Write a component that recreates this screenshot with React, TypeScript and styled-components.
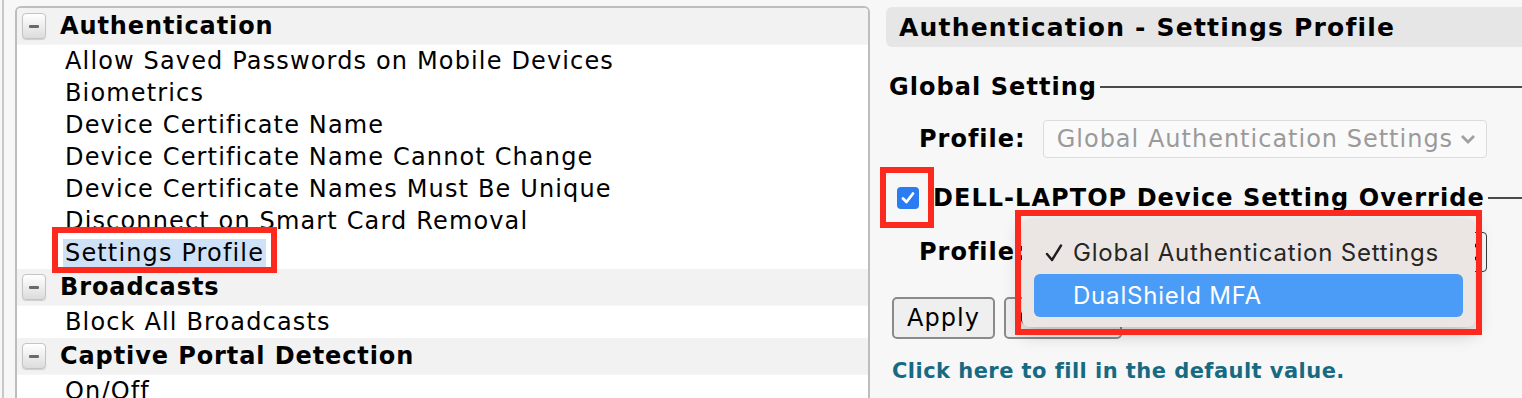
import React from "react";
import styled, { createGlobalStyle } from "styled-components";

const GlobalStyle = createGlobalStyle`
  html, body {
    margin: 0;
    padding: 0;
    background: #f7f7f7;
    font-family: "DejaVu Sans", Verdana, sans-serif;
    color: #000;
  }
`;

const Page = styled.div`
  position: relative;
  display: flex;
  width: 1522px;
  height: 398px;
  overflow: hidden;
  background: #f7f7f7;
`;

// left edge strip
const Rail = styled.div`
  width: 2px;
  flex: none;
  border-right: 2px solid #c8c8c8;
`;

// left tree
const TreePanel = styled.section`
  flex: none;
  width: 851px;
  margin: 6px 0 0 11px;
  background: #fff;
  border: 2px solid #bdbdbd;
  border-bottom: none;
  border-radius: 6px 6px 0 0;
  overflow: hidden;
`;

const GroupHeader = styled.div`
  display: flex;
  align-items: center;
  gap: 14px;
  height: 36px;
  padding-left: 5px;
  background: #f2f2f2;
  border-bottom: 1px solid #f6f6f6;
  font-size: 24px;
  font-weight: bold;
  letter-spacing: 0.9px;
`;

const Toggle = styled.span`
  display: flex;
  align-items: center;
  justify-content: center;
  width: 22px;
  height: 24px;
  border: 1px solid #c4c4c4;
  border-radius: 4px;
  background: linear-gradient(#ffffff, #dcdcdc);
  box-shadow: 0 1px 1px rgba(0, 0, 0, 0.15);

  &::after {
    content: "";
    width: 10px;
    height: 3px;
    border-radius: 1px;
    background: #6a6a6a;
  }
`;

const Item = styled.div`
  display: flex;
  align-items: center;
  height: 32px;
  padding-left: 46px;
  font-size: 24px;
  letter-spacing: 1.15px;
  white-space: nowrap;
`;

const ItemLabel = styled.span<{ $selected?: boolean }>`
  padding: 0 2px;
  background: ${(p) => (p.$selected ? "#cfe1f6" : "transparent")};
`;

// right detail
const DetailPanel = styled.main`
  flex: 1;
  min-width: 0;
  margin: 7px 0 0 16px;
  display: flex;
  flex-direction: column;
`;

const TitleBar = styled.div`
  display: flex;
  align-items: center;
  height: 40px;
  padding-left: 13px;
  background: #e6e6e6;
  border-radius: 6px 0 0 6px;
  font-size: 25px;
  font-weight: bold;
  letter-spacing: 1.2px;
  white-space: nowrap;
`;

const LegendRow = styled.div<{ $top: number; $indent: number }>`
  display: flex;
  align-items: center;
  height: 28px;
  margin-top: ${(p) => p.$top}px;
  padding-left: ${(p) => p.$indent}px;
  font-size: 24px;
  font-weight: bold;
  letter-spacing: 1.05px;
  white-space: nowrap;
`;

const Rule = styled.span`
  flex: 1;
  height: 2px;
  margin-left: 3px;
  background: #4a4a4a;
`;

const Checkbox = styled.span`
  display: flex;
  align-items: center;
  justify-content: center;
  width: 22px;
  height: 22px;
  margin-right: 14px;
  border-radius: 4px;
  background: #2b7cf2;
`;

const FieldRow = styled.div<{ $top: number }>`
  display: flex;
  align-items: center;
  gap: 17px;
  margin-top: ${(p) => p.$top}px;
  padding-left: 33px;
`;

const FieldLabel = styled.span`
  font-size: 24px;
  font-weight: bold;
  letter-spacing: 1px;
`;

const SelectBox = styled.div<{ $disabled?: boolean }>`
  display: flex;
  align-items: center;
  justify-content: space-between;
  box-sizing: border-box;
  width: 444px;
  height: ${(p) => (p.$disabled ? 38 : 40)}px;
  padding: 0 ${(p) => (p.$disabled ? 10 : 5)}px 0 13px;
  background: #fafafa;
  border: 1px solid ${(p) => (p.$disabled ? "#dcdcdc" : "#3a3a3a")};
  border-radius: 4px;
  color: ${(p) => (p.$disabled ? "#9a9a9a" : "#000")};
  font-size: 24px;
  letter-spacing: 1px;
  white-space: nowrap;
`;

const ButtonRow = styled.div`
  display: flex;
  gap: 9px;
  margin-top: 25px;
  padding-left: 6px;
`;

const Button = styled.button<{ $width: number }>`
  box-sizing: border-box;
  width: ${(p) => p.$width}px;
  height: 42px;
  padding: 0;
  background: #efefef;
  border: 2px solid #8a8a8a;
  border-radius: 5px;
  font-family: "DejaVu Sans", Verdana, sans-serif;
  font-size: 24px;
  letter-spacing: 1px;
  color: #000;
`;

const HelpLink = styled.a`
  display: block;
  margin-top: 20px;
  padding-left: 6px;
  color: #166a82;
  font-size: 21px;
  font-weight: bold;
  letter-spacing: 0.45px;
  text-decoration: none;
  white-space: nowrap;
`;

// native select popup, drawn over the form
const Popup = styled.div`
  position: absolute;
  left: 1022px;
  top: 219px;
  width: 453px;
  box-sizing: border-box;
  padding: 12px 12px 10px;
  background: #ebe6e3;
  border-radius: 7px;
  box-shadow: 0 6px 18px rgba(0, 0, 0, 0.25);
  font-family: Inter, "Liberation Sans", sans-serif;
  font-size: 24px;
  letter-spacing: 0.8px;
`;

const PopupOption = styled.div<{ $active?: boolean }>`
  display: flex;
  align-items: center;
  height: 43px;
  padding-left: 39px;
  position: relative;
  border-radius: 6px;
  background: ${(p) => (p.$active ? "#4a9cf6" : "transparent")};
  color: ${(p) => (p.$active ? "#fff" : "#262626")};
`;

const Tick = styled.svg`
  position: absolute;
  left: 11px;
  top: 13px;
`;

// red annotation frame
const Mark = styled.div<{ $x: number; $y: number; $w: number; $h: number }>`
  position: absolute;
  left: ${(p) => p.$x}px;
  top: ${(p) => p.$y}px;
  width: ${(p) => p.$w}px;
  height: ${(p) => p.$h}px;
  box-sizing: border-box;
  border: 6px solid #fc2a1e;
  pointer-events: none;
`;

const authItems = [
  "Allow Saved Passwords on Mobile Devices",
  "Biometrics",
  "Device Certificate Name",
  "Device Certificate Name Cannot Change",
  "Device Certificate Names Must Be Unique",
  "Disconnect on Smart Card Removal",
];

const Chevron = () => (
  <svg width="16" height="10" viewBox="0 0 16 10">
    <path d="M2 2 L8 8 L14 2" fill="none" stroke="#a0a0a0" strokeWidth="2.8" />
  </svg>
);

// up/down arrows of an enabled select
const UpDown = () => (
  <svg width="10" height="22" viewBox="0 0 10 22">
    <path d="M2 8 L5 4 L8 8 M2 14 L5 18 L8 14" fill="none" stroke="#000" strokeWidth="2" />
  </svg>
);

export default function App() {
  return (
    <Page>
      <GlobalStyle />
      <Rail />
      <TreePanel>
        <GroupHeader>
          <Toggle />
          Authentication
        </GroupHeader>
        {authItems.map((t) => (
          <Item key={t}>
            <ItemLabel>{t}</ItemLabel>
          </Item>
        ))}
        <Item>
          <ItemLabel $selected>Settings Profile</ItemLabel>
        </Item>
        <GroupHeader>
          <Toggle />
          Broadcasts
        </GroupHeader>
        <Item>
          <ItemLabel>Block All Broadcasts</ItemLabel>
        </Item>
        <GroupHeader>
          <Toggle />
          Captive Portal Detection
        </GroupHeader>
        <Item>
          <ItemLabel>On/Off</ItemLabel>
        </Item>
      </TreePanel>

      <DetailPanel>
        <TitleBar>Authentication - Settings Profile</TitleBar>
        <LegendRow $top={26} $indent={3}>
          Global Setting
          <Rule />
        </LegendRow>
        <FieldRow $top={19}>
          <FieldLabel>Profile:</FieldLabel>
          <SelectBox $disabled>
            Global Authentication Settings
            <Chevron />
          </SelectBox>
        </FieldRow>
        <LegendRow $top={26} $indent={11}>
          <Checkbox>
            <svg width="16" height="16" viewBox="0 0 16 16">
              <path d="M3 8.5 L6.5 12 L13 3.5" fill="none" stroke="#fff" strokeWidth="2.8" strokeLinecap="round" strokeLinejoin="round" />
            </svg>
          </Checkbox>
          DELL-LAPTOP Device Setting Override
          <Rule />
        </LegendRow>
        <FieldRow $top={20}>
          <FieldLabel>Profile:</FieldLabel>
          <SelectBox>
            Global Authentication Settings
            <UpDown />
          </SelectBox>
        </FieldRow>
        <ButtonRow>
          <Button $width={103}>Apply</Button>
          <Button $width={118}>Cancel</Button>
        </ButtonRow>
        <HelpLink href="#">Click here to fill in the default value.</HelpLink>
      </DetailPanel>

      <Popup>
        <PopupOption>
          <Tick width="18" height="18" viewBox="0 0 18 18">
            <path d="M2 10 L7 16 L16 1.5" fill="none" stroke="#1e1e1e" strokeWidth="2.4" strokeLinecap="round" strokeLinejoin="round" />
          </Tick>
          Global Authentication Settings
        </PopupOption>
        <PopupOption $active>DualShield MFA</PopupOption>
      </Popup>

      <Mark $x={52} $y={227} $w={225} $h={46} />
      <Mark $x={880} $y={167} $w={54} $h={61} />
      <Mark $x={1015} $y={210} $w={467} $h={125} />
    </Page>
  );
}
